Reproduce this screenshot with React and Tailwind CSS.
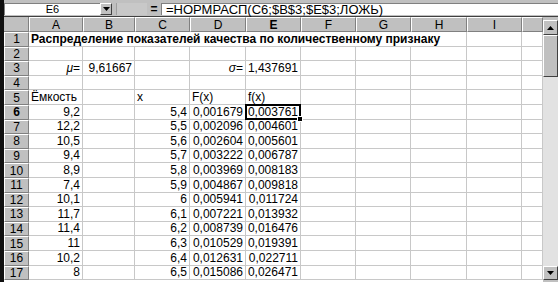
import React from "react";

const cols = ["A", "B", "C", "D", "E", "F", "G", "H", "I", ""];

const A = ["9,2", "12,2", "10,5", "9,4", "8,9", "7,4", "10,1", "11,7", "11,4", "11", "10,2", "8"];
const C = ["5,4", "5,5", "5,6", "5,7", "5,8", "5,9", "6", "6,1", "6,2", "6,3", "6,4", "6,5"];
const D = ["0,001679", "0,002096", "0,002604", "0,003222", "0,003969", "0,004867", "0,005941", "0,007221", "0,008739", "0,010529", "0,012631", "0,015086"];
const E = ["0,003761", "0,004601", "0,005601", "0,006787", "0,008183", "0,009818", "0,011724", "0,013932", "0,016476", "0,019391", "0,022711", "0,026471"];

const cellBase =
  "flex items-end border-r border-b border-[#c8c8c8] px-[2px] overflow-hidden whitespace-nowrap leading-[13px] text-[12px] text-black";

function Cell({ children, right, span, active, className = "" }) {
  return (
    <div
      className={`${cellBase} ${right ? "justify-end" : "justify-start"} ${span || ""} ${active ? "relative overflow-visible" : ""} ${className}`}
    >
      {children}
      {active && (
        <div className="absolute -left-[1px] -top-[1px] -right-[1px] -bottom-[1px] border-2 border-black z-10">
          <div className="absolute -right-[4px] -bottom-[4px] w-[6px] h-[6px] bg-black border border-white" />
        </div>
      )}
    </div>
  );
}

function RowHeader({ n, bold }) {
  return (
    <div
      className={`flex items-center justify-center bg-[#c0c0c0] border-t border-l border-t-white border-l-white border-r border-b border-r-[#808080] border-b-[#808080] text-[12px] leading-none text-black ${bold ? "font-bold" : ""}`}
    >
      {n}
    </div>
  );
}

function ColHeader({ label, bold }) {
  return (
    <div
      className={`flex items-center justify-center bg-[#c0c0c0] border-t border-l border-t-white border-l-white border-r border-b border-r-[#808080] border-b-[#808080] text-[12px] leading-none text-black ${bold ? "font-bold" : ""}`}
    >
      {label}
    </div>
  );
}

function Triangle({ up }) {
  return (
    <svg width="7" height="4" viewBox="0 0 7 4">
      {up ? <path d="M0 4 L7 4 L3.5 0 Z" fill="black" /> : <path d="M0 0 L7 0 L3.5 4 Z" fill="black" />}
    </svg>
  );
}

export default function App() {
  const rows = [];
  for (let r = 1; r <= 17; r++) {
    const cells = [];
    if (r === 1) {
      cells.push(
        <Cell key="a" span="col-span-8" className="font-bold text-[11.8px]">
          Распределение показателей качества по количественному признаку
        </Cell>
      );
      cells.push(<Cell key="i" />);
      cells.push(<Cell key="j" />);
    } else {
      for (let c = 0; c < 10; c++) {
        let content = null;
        let right = false;
        let active = false;
        if (r === 3) {
          if (c === 0) {
            content = (
              <span>
                <i>μ</i>=
              </span>
            );
            right = true;
          }
          if (c === 1) {
            content = "9,61667";
            right = true;
          }
          if (c === 3) {
            content = (
              <span>
                <i>σ</i>=
              </span>
            );
            right = true;
          }
          if (c === 4) {
            content = "1,437691";
            right = true;
          }
        } else if (r === 5) {
          if (c === 0) content = "Ёмкость";
          if (c === 2) content = "x";
          if (c === 3) content = "F(x)";
          if (c === 4) content = "f(x)";
        } else if (r >= 6) {
          const i = r - 6;
          right = true;
          if (c === 0) content = A[i];
          if (c === 2) content = C[i];
          if (c === 3) content = D[i];
          if (c === 4) content = E[i];
          if (r === 6 && c === 4) active = true;
        }
        cells.push(
          <Cell key={c} right={right} active={active}>
            {content}
          </Cell>
        );
      }
    }
    rows.push(
      <React.Fragment key={r}>
        <RowHeader n={r} bold={r === 6} />
        {cells}
      </React.Fragment>
    );
  }

  return (
    <div
      className="w-[558px] h-[282px] overflow-hidden bg-[#c0c0c0] flex"
      style={{ fontFamily: '"Liberation Sans", Arial, sans-serif' }}
    >
      <div className="w-[4px] bg-[#101010] shrink-0" />
      <div className="flex-1 flex flex-col min-w-0">
        {/* Formula bar */}
        <div className="h-[17px] flex items-stretch bg-[#c0c0c0] border-b border-[#404040] pt-[3px] pb-[1px] shrink-0">
          <div className="w-[96px] bg-white border-t border-l border-[#808080] flex items-center justify-center text-[11px] text-black leading-none">
            E6
          </div>
          <div className="w-[12px] bg-[#c0c0c0] border-t border-l border-white border-r border-b border-r-[#404040] border-b-[#404040] flex items-center justify-center">
            <Triangle />
          </div>
          <div className="w-[4px]" />
          <div className="w-[31px] bg-[#c8c8c8] border-l border-[#a0a0a0]" />
          <div className="w-[14px] bg-[#c0c0c0] flex items-center justify-center text-[12px] font-bold leading-none text-black">
            =
          </div>
          <div className="flex-1 bg-white border-t border-l border-[#808080] flex items-center pl-[4px] text-[13px] text-black leading-none whitespace-nowrap">
            =НОРМРАСП(C6;$B$3;$E$3;ЛОЖЬ)
          </div>
        </div>
        <div className="flex-1 flex min-h-0">
          <div className="grid grid-cols-[25px_54px_52px_55px_56px_55px_55px_55px_56px_55px_21px] grid-rows-[15px_repeat(17,14.6px)] bg-white content-start">
            <div className="bg-[#c0c0c0] border-r border-b border-r-[#808080] border-b-[#808080]" />
            {cols.map((c, i) => (
              <ColHeader key={i} label={c} bold={c === "E"} />
            ))}
            {rows}
          </div>
          <div className="w-[15px] flex flex-col bg-[#e2e2e2]">
            <div className="h-[3px] bg-[#c0c0c0]" />
            <div className="h-[15px] bg-[#c0c0c0] border-t border-l border-white border-r border-b border-r-[#404040] border-b-[#404040] flex items-center justify-center">
              <Triangle up />
            </div>
            <div className="h-[42px] bg-[#c0c0c0] border-t border-l border-white border-r border-b border-r-[#404040] border-b-[#404040]" />
            <div className="flex-1" />
            <div className="h-[14px] bg-[#c0c0c0] border-t border-l border-white border-r border-b border-r-[#404040] border-b-[#404040] flex items-center justify-center">
              <Triangle />
            </div>
            <div className="h-[2px] bg-[#c0c0c0]" />
          </div>
        </div>
      </div>
    </div>
  );
}
